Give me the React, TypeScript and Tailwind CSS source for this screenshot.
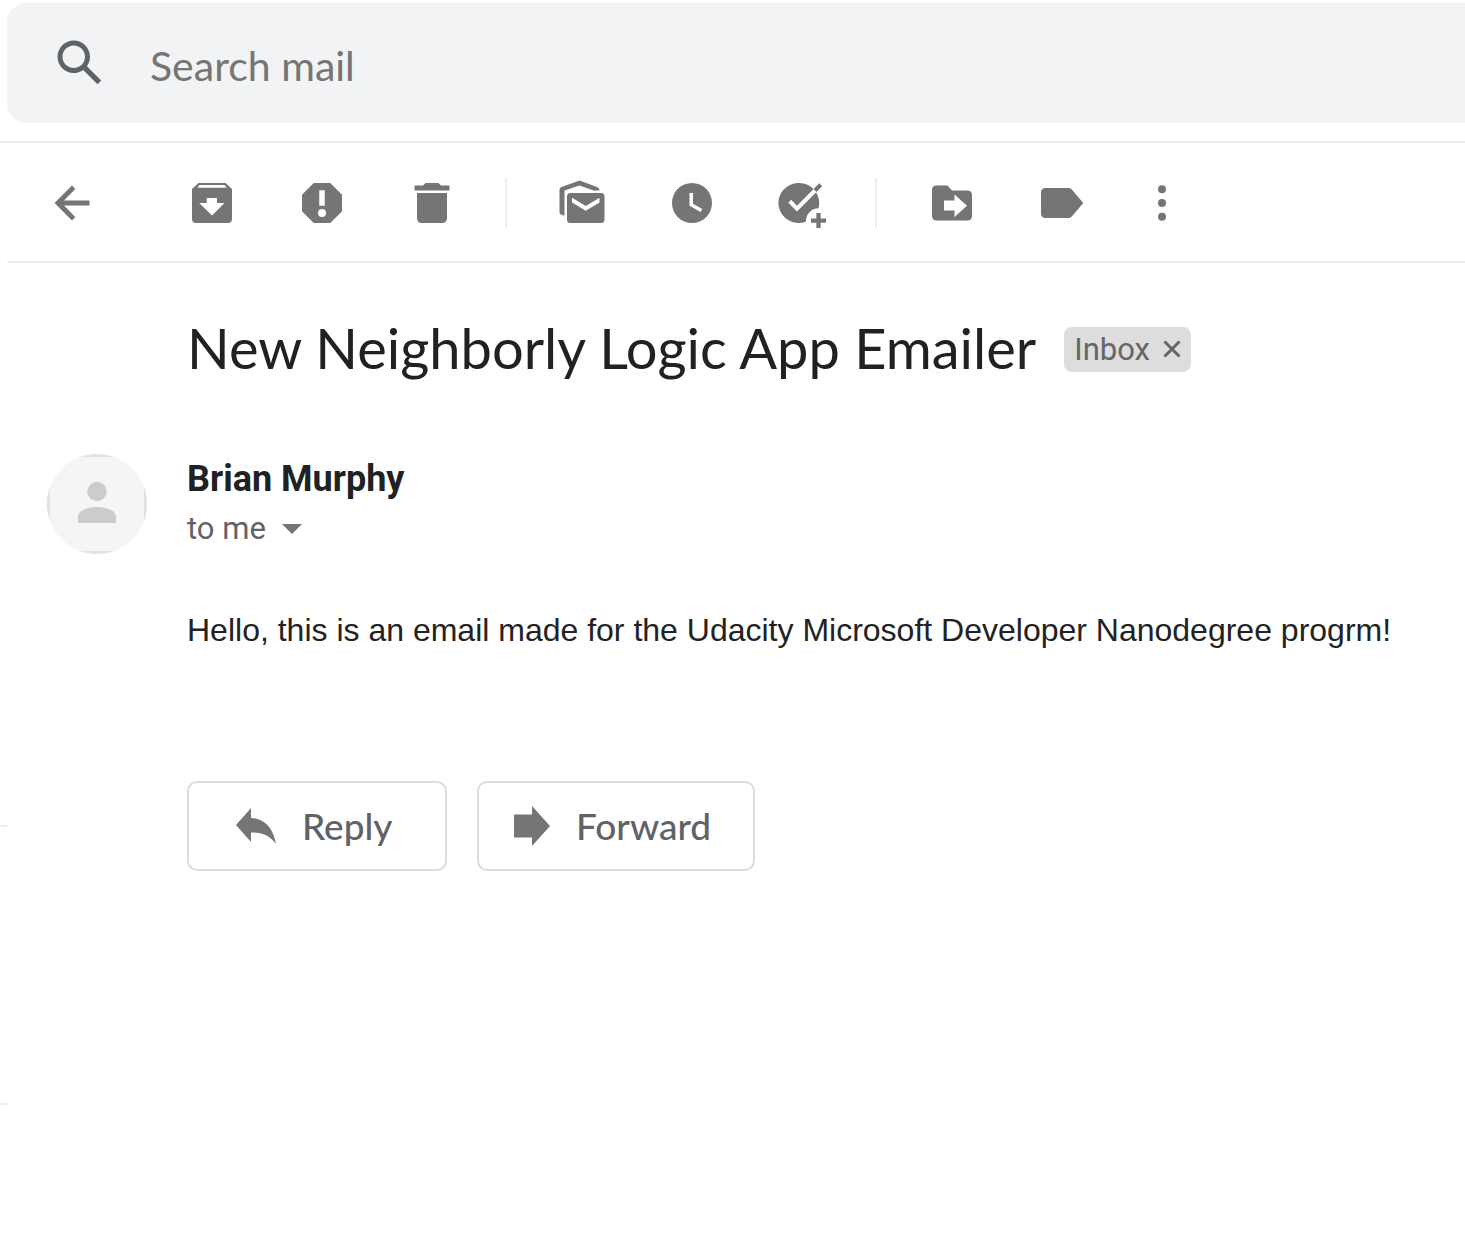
import type { ReactNode } from "react";

function ToolButton({ label, children }: { label: string; children: ReactNode }) {
  return (
    <button type="button" aria-label={label} className="shrink-0">
      <svg viewBox="0 0 20 20" className="size-[50px]" fill="currentColor" aria-hidden="true">
        {children}
      </svg>
    </button>
  );
}

function Divider() {
  return <div className="mr-[50px] ml-12 h-[50px] w-0.5 shrink-0 bg-[#eceff1]" />;
}

function SearchBar() {
  return (
    <header className="pt-[3px] pb-[18px] pl-[7px]">
      <form className="flex h-[120px] items-center gap-10 rounded-l-[20px] bg-[#f1f3f4] pl-[43px]">
        <button type="button" aria-label="Search" className="shrink-0 text-[#5f6368]">
          <svg viewBox="0 0 24 24" className="size-[60px]" fill="currentColor" aria-hidden="true">
            <path d="M20.49 19l-5.73-5.73C15.53 12.2 16 10.91 16 9.5 16 5.91 13.09 3 9.5 3S3 5.91 3 9.5 5.91 16 9.5 16c1.41 0 2.7-.47 3.77-1.24L19 20.49 20.49 19zM5 9.5C5 7.01 7.01 5 9.5 5S14 7.01 14 9.5 11.99 14 9.5 14 5 11.99 5 9.5z" />
          </svg>
        </button>
        <input
          type="text"
          aria-label="Search mail"
          placeholder="Search mail"
          className="h-full min-w-0 flex-1 bg-transparent pt-1 font-['Lato',sans-serif] text-[41px] text-[#202124] outline-none placeholder:text-[#757575]"
        />
      </form>
    </header>
  );
}

function Toolbar() {
  return (
    <div className="flex h-[120px] items-center border-b-2 border-[#eceff1] pt-0.5 pl-10 text-[#757575]">
      <div className="mr-[90px] flex">
        <ToolButton label="Back to Inbox">
          <path d="M17 11H6.8l4.5 4.6L10 17l-7-7 7-7 1.3 1.4L6.8 9H17z" />
        </ToolButton>
      </div>
      <div className="flex gap-[60px]">
        <ToolButton label="Archive">
          <path
            fillRule="evenodd"
            d="M4.6 2h10.8L18 4.4v12.1c0 .9-.6 1.5-1.5 1.5h-13C2.6 18 2 17.4 2 16.5V4.4zM4.9 2.8 4.2 3.9h11.7l-.8-1.1zM7.9 8v2H4.9L10 15l5-5h-3V8z"
          />
        </ToolButton>
        <ToolButton label="Report spam">
          <path
            fillRule="evenodd"
            d="M6.7 2h6.6L18 6.7v6.6L13.3 18H6.7L2 13.3V6.7zM8.9 4.9v6.2h2.2V4.9zM10 12.4a1.6 1.6 0 1 0 0 3.2 1.6 1.6 0 0 0 0-3.2z"
          />
        </ToolButton>
        <ToolButton label="Delete">
          <path d="M3 3h3.4l1-1h5.2l1 1H17v2H3zM4 6h12v10.2c0 1-.8 1.8-1.8 1.8H5.8C4.8 18 4 17.2 4 16.2z" />
        </ToolButton>
      </div>
      <Divider />
      <div className="flex gap-[60px]">
        <ToolButton label="Mark as unread">
          <path d="M9 1 1.8 3.6C1.2 3.9 1 4.3 1 4.9v8.7C1 14.5 1.8 15 3 15V5l6-2 5.6 2H17c0-.7-.4-1.2-1-1.4z" />
          <path
            fillRule="evenodd"
            d="M5.3 6h12.4c.8 0 1.3.5 1.3 1.3v9.4c0 .8-.5 1.3-1.3 1.3H5.3C4.5 18 4 17.5 4 16.7V7.3C4 6.5 4.5 6 5.3 6zM6 7.9v1.9l5.5 3.3L17 9.8V7.9l-5.5 3.3z"
          />
        </ToolButton>
        <ToolButton label="Snooze">
          <path fillRule="evenodd" d="M10 2a8 8 0 1 0 0 16 8 8 0 0 0 0-16zM9 6h1.4v4.3l3.7 2.1-.7 1.2L9 11.1z" />
        </ToolButton>
        <ToolButton label="Add to Tasks">
          <path d="M8.6 2a8 8 0 1 0 3 15.4 5 5 0 0 1 5-5.3A8 8 0 0 0 8.6 2z" />
          <path d="M5.1 9.3 8 12.3 15.6 4.6" fill="none" stroke="#fff" strokeWidth="1.6" />
          <path d="M15.2 5 17.5 2.7" stroke="currentColor" strokeWidth="1.6" />
          <path d="M13.6 17h6M16.6 14v6" stroke="currentColor" strokeWidth="1.7" />
        </ToolButton>
      </div>
      <Divider />
      <div className="flex gap-[60px]">
        <ToolButton label="Move to">
          <path
            fillRule="evenodd"
            d="M3.7 3h4.5L10 5h6.3c1 0 1.7.7 1.7 1.7v8.6c0 1-.7 1.7-1.7 1.7H3.7C2.7 17 2 16.3 2 15.3V4.7C2 3.7 2.7 3 3.7 3zM6.8 9v4H11v2.6l5-4.5-5-4.5V9z"
          />
        </ToolButton>
        <ToolButton label="Labels">
          <path d="M3.3 4h9.3c.6 0 1 .2 1.4.7l4.5 5.3-4.5 5.3c-.4.5-.8.7-1.4.7H3.3c-1 0-1.7-.7-1.7-1.7V5.7c0-1 .7-1.7 1.7-1.7z" />
        </ToolButton>
      </div>
      <div className="ml-[50px] flex">
        <ToolButton label="More">
          <circle cx="10" cy="4.5" r="1.6" />
          <circle cx="10" cy="10" r="1.6" />
          <circle cx="10" cy="15.5" r="1.6" />
        </ToolButton>
      </div>
    </div>
  );
}

function Message() {
  return (
    <article className="px-10">
      <div className="flex items-center gap-7 pt-[50px] pl-[140px]">
        <h1 className="font-['Lato',sans-serif] text-[56px] leading-[70px] whitespace-nowrap text-[#202124]">
          New Neighborly Logic App Emailer
        </h1>
        <span className="mt-0.5 flex h-[45px] items-center gap-[13px] rounded-lg bg-[#ddd] px-2.5 font-['Roboto',sans-serif] text-[31px] leading-[45px] text-[#666]">
          Inbox
          <button type="button" aria-label="Remove label Inbox">
            <svg viewBox="0 0 18 18" className="size-[18px]" stroke="currentColor" strokeWidth="3" aria-hidden="true">
              <path d="M1.5 1.5l15 15M16.5 1.5l-15 15" />
            </svg>
          </button>
        </span>
      </div>

      <div className="mt-[71px] flex gap-10">
        <div className="size-[100px] shrink-0 overflow-hidden rounded-full">
          <div className="size-full border-[3px] border-[#e2e2e2] bg-[#f5f5f5]">
            <svg viewBox="3 3 94 94" className="size-full" fill="#ccc" aria-hidden="true">
              <circle cx="50" cy="37.5" r="9.7" />
              <path d="M31 69v-6c0-6.500 10-10 19-10s19 3.500 19 10v6z" />
            </svg>
          </div>
        </div>
        <div className="min-w-0 flex-1">
          <h2 className="font-['Roboto',sans-serif] text-[36px] leading-[50px] font-bold text-[#202124]">Brian Murphy</h2>
          <button
            type="button"
            className="flex items-center gap-4 font-['Roboto',sans-serif] text-[31px] leading-[50px] text-[#5f6368]"
          >
            to me
            <svg viewBox="0 0 20 10" className="h-2.5 w-5" fill="#757575" aria-hidden="true">
              <path d="M0 0h20L10 10z" />
            </svg>
          </button>
        </div>
      </div>

      <div className="pl-[140px]">
        <p className="mt-[51px] font-['Liberation_Sans',sans-serif] text-[32px] leading-[50px] text-[#222]">
          Hello, this is an email made for the Udacity Microsoft Developer Nanodegree progrm!
        </p>
        <div className="mt-[126px] flex gap-[30px] font-['Lato',sans-serif] text-[37px] font-medium text-[#5f6368]">
          <button
            type="button"
            className="flex h-[90px] w-[260px] items-center gap-[26px] rounded-[10px] border-2 border-[#dadce0] pl-[47px]"
          >
            <svg viewBox="0 0 40 36" className="h-9 w-10 shrink-0" fill="#757575" aria-hidden="true">
              <path d="M0 17 15 0v10c14 1 22 10 25 26-7-9-14-11.500-25-11.500V34z" />
            </svg>
            Reply
          </button>
          <button
            type="button"
            className="flex h-[90px] w-[278px] items-center gap-[26px] rounded-[10px] border-2 border-[#dadce0] pl-[35px]"
          >
            <svg viewBox="0 0 36 40" className="h-10 w-9 shrink-0" fill="#757575" aria-hidden="true">
              <path d="M0 8.500h18V0l18 20-18 20v-8.500H0z" />
            </svg>
            Forward
          </button>
        </div>
      </div>
    </article>
  );
}

export default function App() {
  return (
    <div className="min-h-screen overflow-hidden bg-white">
      <SearchBar />
      <div className="flex border-t-2 border-[#eceff1]">
        <aside className="w-[7px] shrink-0">
          <div className="h-[684px] border-b-2 border-[#eceff1]" />
          <div className="h-[278px] border-b-2 border-[#eceff1]" />
        </aside>
        <main className="min-w-0 flex-1">
          <Toolbar />
          <Message />
        </main>
      </div>
    </div>
  );
}
